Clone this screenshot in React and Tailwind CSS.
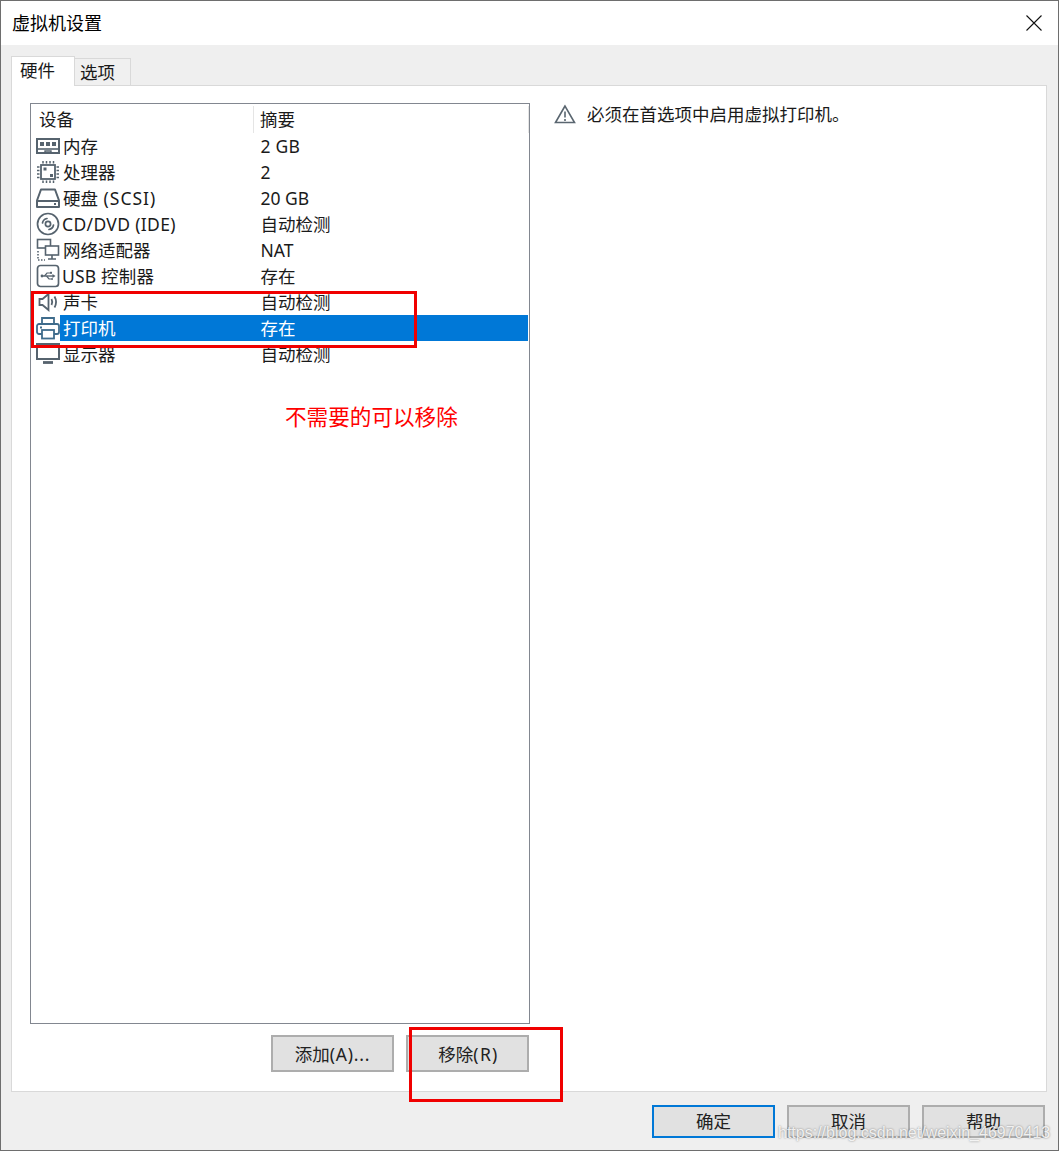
import React from 'react';

const ICON = '#56636e';

const MemoryIcon = () => (
  <svg width="24" height="16" viewBox="0 0 24 16" fill="none" stroke={ICON} strokeWidth="2">
    <path d="M1 1h22v14H1z" />
    <path d="M1 11h22" strokeWidth="1.6" />
    <rect x="4" y="4" width="4" height="4" fill={ICON} stroke="none" />
    <rect x="10" y="4" width="4" height="4" fill={ICON} stroke="none" />
    <rect x="16" y="4" width="4" height="4" fill={ICON} stroke="none" />
    <path d="M9 15v-2h6v2" strokeWidth="1.4" />
  </svg>
);

const CpuIcon = () => (
  <svg width="24" height="24" viewBox="0 0 24 24" fill="none" stroke={ICON} strokeWidth="1.8">
    <rect x="5" y="5" width="14" height="14" />
    <path d="M7 1v2.500M10.500 1v2.500M14 1v2.500M17.500 1v2.500M7 20.500V23M10.500 20.500V23M14 20.500V23M17.500 20.500V23M1 7h2.500M1 10.500h2.500M1 14h2.500M1 17.500h2.500M20.500 7H23M20.500 10.500H23M20.500 14H23M20.500 17.500H23" strokeWidth="1.5" />
    <rect x="7.500" y="7.500" width="3" height="3" fill={ICON} stroke="none" />
    <rect x="14" y="14" width="3" height="3" fill={ICON} stroke="none" />
  </svg>
);

const DiskIcon = () => (
  <svg width="24" height="20" viewBox="0 0 24 20" fill="none" stroke={ICON} strokeWidth="2" strokeLinejoin="round">
    <path d="M5 1.500h14l4 11V19H1v-6.500z" />
    <path d="M1 13h22" />
    <path d="M18 16h2" />
  </svg>
);

const CdIcon = () => (
  <svg width="24" height="24" viewBox="0 0 24 24" fill="none" stroke={ICON} strokeWidth="1.7">
    <circle cx="12" cy="12" r="10.500" />
    <circle cx="12" cy="12" r="2.600" />
    <path d="M6.500 11a5.500 5.500 0 0 1 4.500-4.500" strokeLinecap="round" />
    <path d="M17.500 13a5.500 5.500 0 0 1-4.500 4.500" strokeLinecap="round" />
  </svg>
);

const NetworkIcon = () => (
  <svg width="24" height="24" viewBox="0 0 24 24" fill="none" stroke={ICON} strokeWidth="1.6">
    <rect x="1.500" y="1.500" width="13" height="8.500" />
    <rect x="9.500" y="8" width="13" height="9" fill="#fff" />
    <path d="M16 17v3.500M12 21h8" />
    <path d="M2 13v9h7" strokeDasharray="1.5 1.5" />
  </svg>
);

const UsbIcon = () => (
  <svg width="24" height="24" viewBox="0 0 24 24" fill="none" stroke={ICON} strokeWidth="1.7">
    <rect x="1.500" y="1.500" width="21" height="21" rx="3" />
    <path d="M6 12h11" strokeWidth="1.4" />
    <path d="M8.500 12l2.500-3h3M10.500 12l2.500 3h2" strokeWidth="1.2" />
    <circle cx="6" cy="12" r="1.400" fill={ICON} stroke="none" />
    <path d="M16.500 10l3 2-3 2z" fill={ICON} stroke="none" />
    <rect x="14" y="7.800" width="2" height="2" fill={ICON} stroke="none" />
    <circle cx="16" cy="15" r="1" fill={ICON} stroke="none" />
  </svg>
);

const SpeakerIcon = () => (
  <svg width="20" height="20" viewBox="0 0 20 20" fill="none" stroke={ICON} strokeWidth="1.8">
    <path d="M1.500 7v6h3l6 5V2l-6 5z" />
    <path d="M13.500 7c1 2 1 4 0 6" />
    <path d="M16.500 4.500c2 3.500 2 7.500 0 11" />
  </svg>
);

const PrinterIcon = () => (
  <svg width="24" height="24" viewBox="0 0 24 24" fill="none" stroke="#3f6c8c" strokeWidth="1.8">
    <path d="M6 8V2h12v6" />
    <path d="M6 18H3a2 2 0 0 1-2-2V10a2 2 0 0 1 2-2h18a2 2 0 0 1 2 2v6a2 2 0 0 1-2 2h-3" />
    <rect x="6" y="14" width="12" height="8.500" />
    <rect x="4" y="10.500" width="2" height="2" fill="#3f6c8c" stroke="none" />
  </svg>
);

const DisplayIcon = () => (
  <svg width="24" height="22" viewBox="0 0 24 22" fill="none" stroke={ICON} strokeWidth="2">
    <rect x="1" y="1" width="22" height="15" />
    <path d="M7 19.500h10" strokeWidth="2.800" />
  </svg>
);

const rows = [
  { name: '内存', value: <span className="tracking-[0.2px]">2 GB</span>, icon: <MemoryIcon />, key: 'mem' },
  { name: '处理器', value: '2', icon: <CpuIcon />, key: 'cpu' },
  { name: <>硬盘<span className="tracking-[1px]"> (SCSI)</span></>, value: '20 GB', icon: <DiskIcon />, key: 'disk' },
  { name: <span className="-ml-px tracking-[0.35px]">CD/DVD (IDE)</span>, value: '自动检测', icon: <CdIcon />, key: 'cd' },
  { name: '网络适配器', value: 'NAT', icon: <NetworkIcon />, key: 'net' },
  { name: <span className="-ml-px tracking-[0.2px]">USB 控制器</span>, value: '存在', icon: <UsbIcon />, key: 'usb' },
  { name: '声卡', value: '自动检测', icon: <SpeakerIcon />, key: 'snd' },
  { name: '打印机', value: '存在', icon: <PrinterIcon />, selected: true, key: 'prn' },
  { name: '显示器', value: '自动检测', icon: <DisplayIcon />, key: 'dsp' },
];

const DeviceRow = ({ name, value, icon, selected }) => (
  <div className="flex h-[26px] items-center">
    <div className="flex w-[29px] shrink-0 justify-center pl-[5px]">{icon}</div>
    <div className={`flex h-full flex-1 items-center pt-[2px] leading-none ${selected ? 'bg-[#0078d7] text-white' : ''}`}>
      <div className="w-[200.5px] pl-[3px]">{name}</div>
      <div>{value}</div>
    </div>
  </div>
);

const DialogButton = ({ children, primary, tall }) => (
  <div className={`flex w-[123px] items-center justify-center border-2 bg-[#e1e1e1] text-[17.5px] leading-none text-[#222] ${tall ? 'h-[37px] pt-[2px]' : 'h-[33px]'} ${primary ? 'border-[#0078d7]' : 'border-[#adadad]'}`}>
    {children}
  </div>
);

export default function App() {
  return (
    <div className="relative flex h-[1151px] w-[1059px] flex-col overflow-hidden border border-[#6e6e6e] bg-[#efefef] font-['Noto_Sans','Noto_Sans_CJK_SC',sans-serif] text-[17.5px] text-[#1a1a1a]">
      {/* title bar */}
      <div className="flex h-[44px] shrink-0 items-center justify-between bg-white pl-[11px] pr-[16px]">
        <span className="text-[18px] text-black">虚拟机设置</span>
        <svg width="16" height="16" viewBox="0 0 16 16" stroke="#111" strokeWidth="1.1">
          <path d="M0.500 0.500l15 15M15.500 0.500l-15 15" />
        </svg>
      </div>

      {/* tabs */}
      <div className="flex h-[40px] shrink-0 items-end pl-[10px]">
        <div className="z-10 -mb-px flex h-[30px] w-[64px] items-center border border-b-0 border-[#d9d9d9] bg-white pb-[2px] pl-[8px]">硬件</div>
        <div className="flex h-[27px] w-[56px] items-center border border-b-0 border-l-0 border-[#d9d9d9] bg-[#f0f0f0] pl-[5px]">选项</div>
      </div>

      {/* main panel */}
      <div className="ml-[10px] mr-[11px] flex h-[1007px] shrink-0 border border-[#d9d9d9] bg-white pl-[18px] pt-[17px]">
        <div className="w-[500px] shrink-0">
          <div className="h-[921px] border border-[#828790] bg-white">
            <div className="flex h-[29px] items-center pt-[2px]">
              <div className="flex h-full w-[223px] items-center border-r border-[#e5e5e5] pl-[8px]">设备</div>
              <div className="flex h-full flex-1 items-center border-r border-[#e5e5e5] pl-[6px]">摘要</div>
            </div>
            <div className="mr-[1px]">
              {rows.map(({ key, ...r }) => (
                <DeviceRow key={key} {...r} />
              ))}
            </div>
          </div>
          <div className="mt-[11px] flex justify-end gap-[12px] pr-[1px]">
            <DialogButton tall>添加<span className="tracking-[0.8px]">(A)...</span></DialogButton>
            <DialogButton tall><span className="pl-[2px]">移除</span><span className="tracking-[1.3px]">(R)</span></DialogButton>
          </div>
        </div>
        <div className="ml-[24px] flex h-[22px] items-center gap-[11px]">
          <svg width="22" height="20" viewBox="0 0 22 20" fill="none" stroke="#5a6670" strokeWidth="1.6">
            <path d="M11 2L1.500 18.500h19z" />
            <path d="M11 7.500v6M11 15v2" />
          </svg>
          <span>必须在首选项中启用虚拟打印机。</span>
        </div>
      </div>

      {/* footer buttons */}
      <div className="mt-[13px] flex justify-end gap-[12px] pr-[13px]">
        <DialogButton primary>确定</DialogButton>
        <DialogButton>取消</DialogButton>
        <DialogButton>帮助</DialogButton>
      </div>

      {/* annotations drawn over the screenshot */}
      <div className="absolute left-[30px] top-[290px] h-[57px] w-[386px] border-[3px] border-[#f00000]" />
      <div className="absolute left-[408px] top-[1026px] h-[75px] w-[154px] border-[3px] border-[#f00000]" />
      <div className="absolute left-[284px] top-[401px] text-[21.6px] leading-[30px] text-[#ff0000]">不需要的可以移除</div>
      <div className="absolute left-[777px] top-[1122px] font-['Liberation_Sans',sans-serif] text-[16px] leading-[20px] text-white/85 [text-shadow:0_0_2px_rgba(0,0,0,0.5)]">https://blog.csdn.net/weixin_46970413</div>
    </div>
  );
}
